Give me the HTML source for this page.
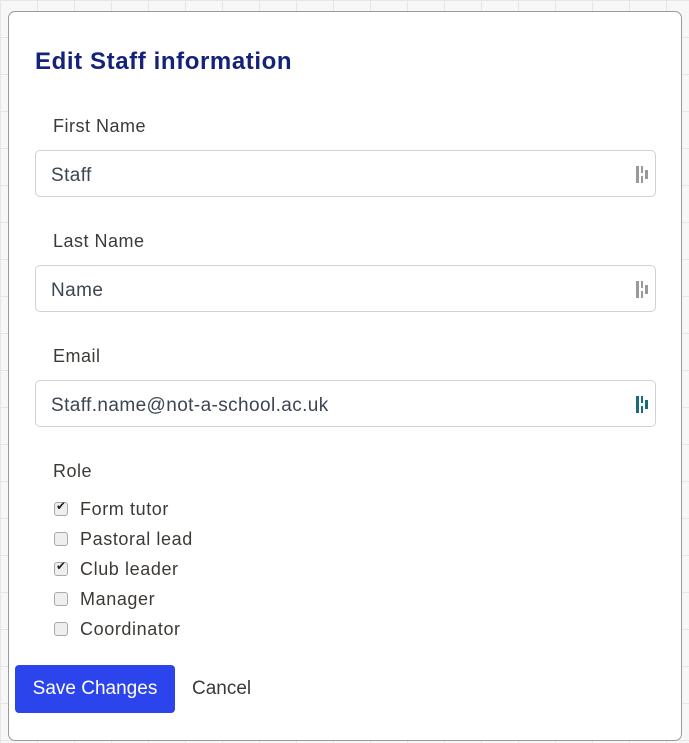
<!DOCTYPE html>
<html><head><style>
body{margin:0;width:689px;height:743px;overflow:hidden;background:#f7f7f7;
background-image:linear-gradient(#e6e6e6 1px,transparent 1px),linear-gradient(90deg,#e6e6e6 1px,transparent 1px);background-size:37px 37px;font-family:"Liberation Sans",sans-serif;color:#3d3a36;position:relative}
.m{position:absolute;left:8px;top:11px;width:672px;height:728px;background:#fff;border:1px solid #9a9a9a;border-radius:7px}
h1{position:absolute;left:26px;top:36px;margin:0;font-size:24px;color:#15227a;font-weight:bold;letter-spacing:0.6px}
.l{position:absolute;left:44px;font-size:18px;letter-spacing:0.5px}
.i{position:absolute;left:26px;border:1px solid #cfd3d8;border-radius:5px;font-size:19px;line-height:49px;padding-left:15px;box-sizing:border-box;width:621px;height:47px;color:#3c4652;letter-spacing:0.4px}
.ic{position:absolute;right:7px;top:15px;width:12px;height:17px}
.ic b{position:absolute;background:#999}
.c{position:absolute;left:45px;font-size:18px;letter-spacing:0.6px}
.c i{position:absolute;left:0;top:3px;width:12px;height:12px;border:1px solid #aaa;border-radius:3px;background:#eee}
.c em{position:absolute;left:2px;top:0px;font-style:normal;font-size:12px;color:#222}
.c span{position:absolute;left:26px;white-space:nowrap}
.bt{position:absolute;left:6px;top:653px;width:160px;height:48px;background:#2b44ec;border-radius:4px;color:#fff;font-size:19px;text-align:center;line-height:48px}
.cn{position:absolute;left:183px;top:653px;line-height:48px;font-size:19px}
</style></head><body>
<div class="m">
<h1>Edit Staff information</h1>
<div class="l" style="top:104px">First Name</div>
<div class="i" style="top:138px">Staff<div class="ic"><b style="left:0;top:0;width:3px;height:17px"></b><b style="left:5px;top:0;width:2px;height:7px"></b><b style="left:5px;top:10px;width:2px;height:7px"></b><b style="left:9px;top:4px;width:3px;height:9px"></b></div></div>
<div class="l" style="top:219px">Last Name</div>
<div class="i" style="top:253px">Name<div class="ic"><b style="left:0;top:0;width:3px;height:17px"></b><b style="left:5px;top:0;width:2px;height:7px"></b><b style="left:5px;top:10px;width:2px;height:7px"></b><b style="left:9px;top:4px;width:3px;height:9px"></b></div></div>
<div class="l" style="top:334px">Email</div>
<div class="i" style="top:368px">Staff.name@not-a-school.ac.uk<div class="ic"><b style="left:0;top:0;width:3px;height:17px;background:#176b7d"></b><b style="left:5px;top:0;width:2px;height:7px;background:#176b7d"></b><b style="left:5px;top:10px;width:2px;height:7px;background:#176b7d"></b><b style="left:9px;top:4px;width:3px;height:9px;background:#176b7d"></b></div></div>
<div class="l" style="top:449px">Role</div>
<div class="c" style="top:487px"><i></i><em>✔</em><span>Form tutor</span></div>
<div class="c" style="top:517px"><i></i><span>Pastoral lead</span></div>
<div class="c" style="top:547px"><i></i><em>✔</em><span>Club leader</span></div>
<div class="c" style="top:577px"><i></i><span>Manager</span></div>
<div class="c" style="top:607px"><i></i><span>Coordinator</span></div>
<div class="bt">Save Changes</div>
<div class="cn">Cancel</div>
</div>
</body></html>
